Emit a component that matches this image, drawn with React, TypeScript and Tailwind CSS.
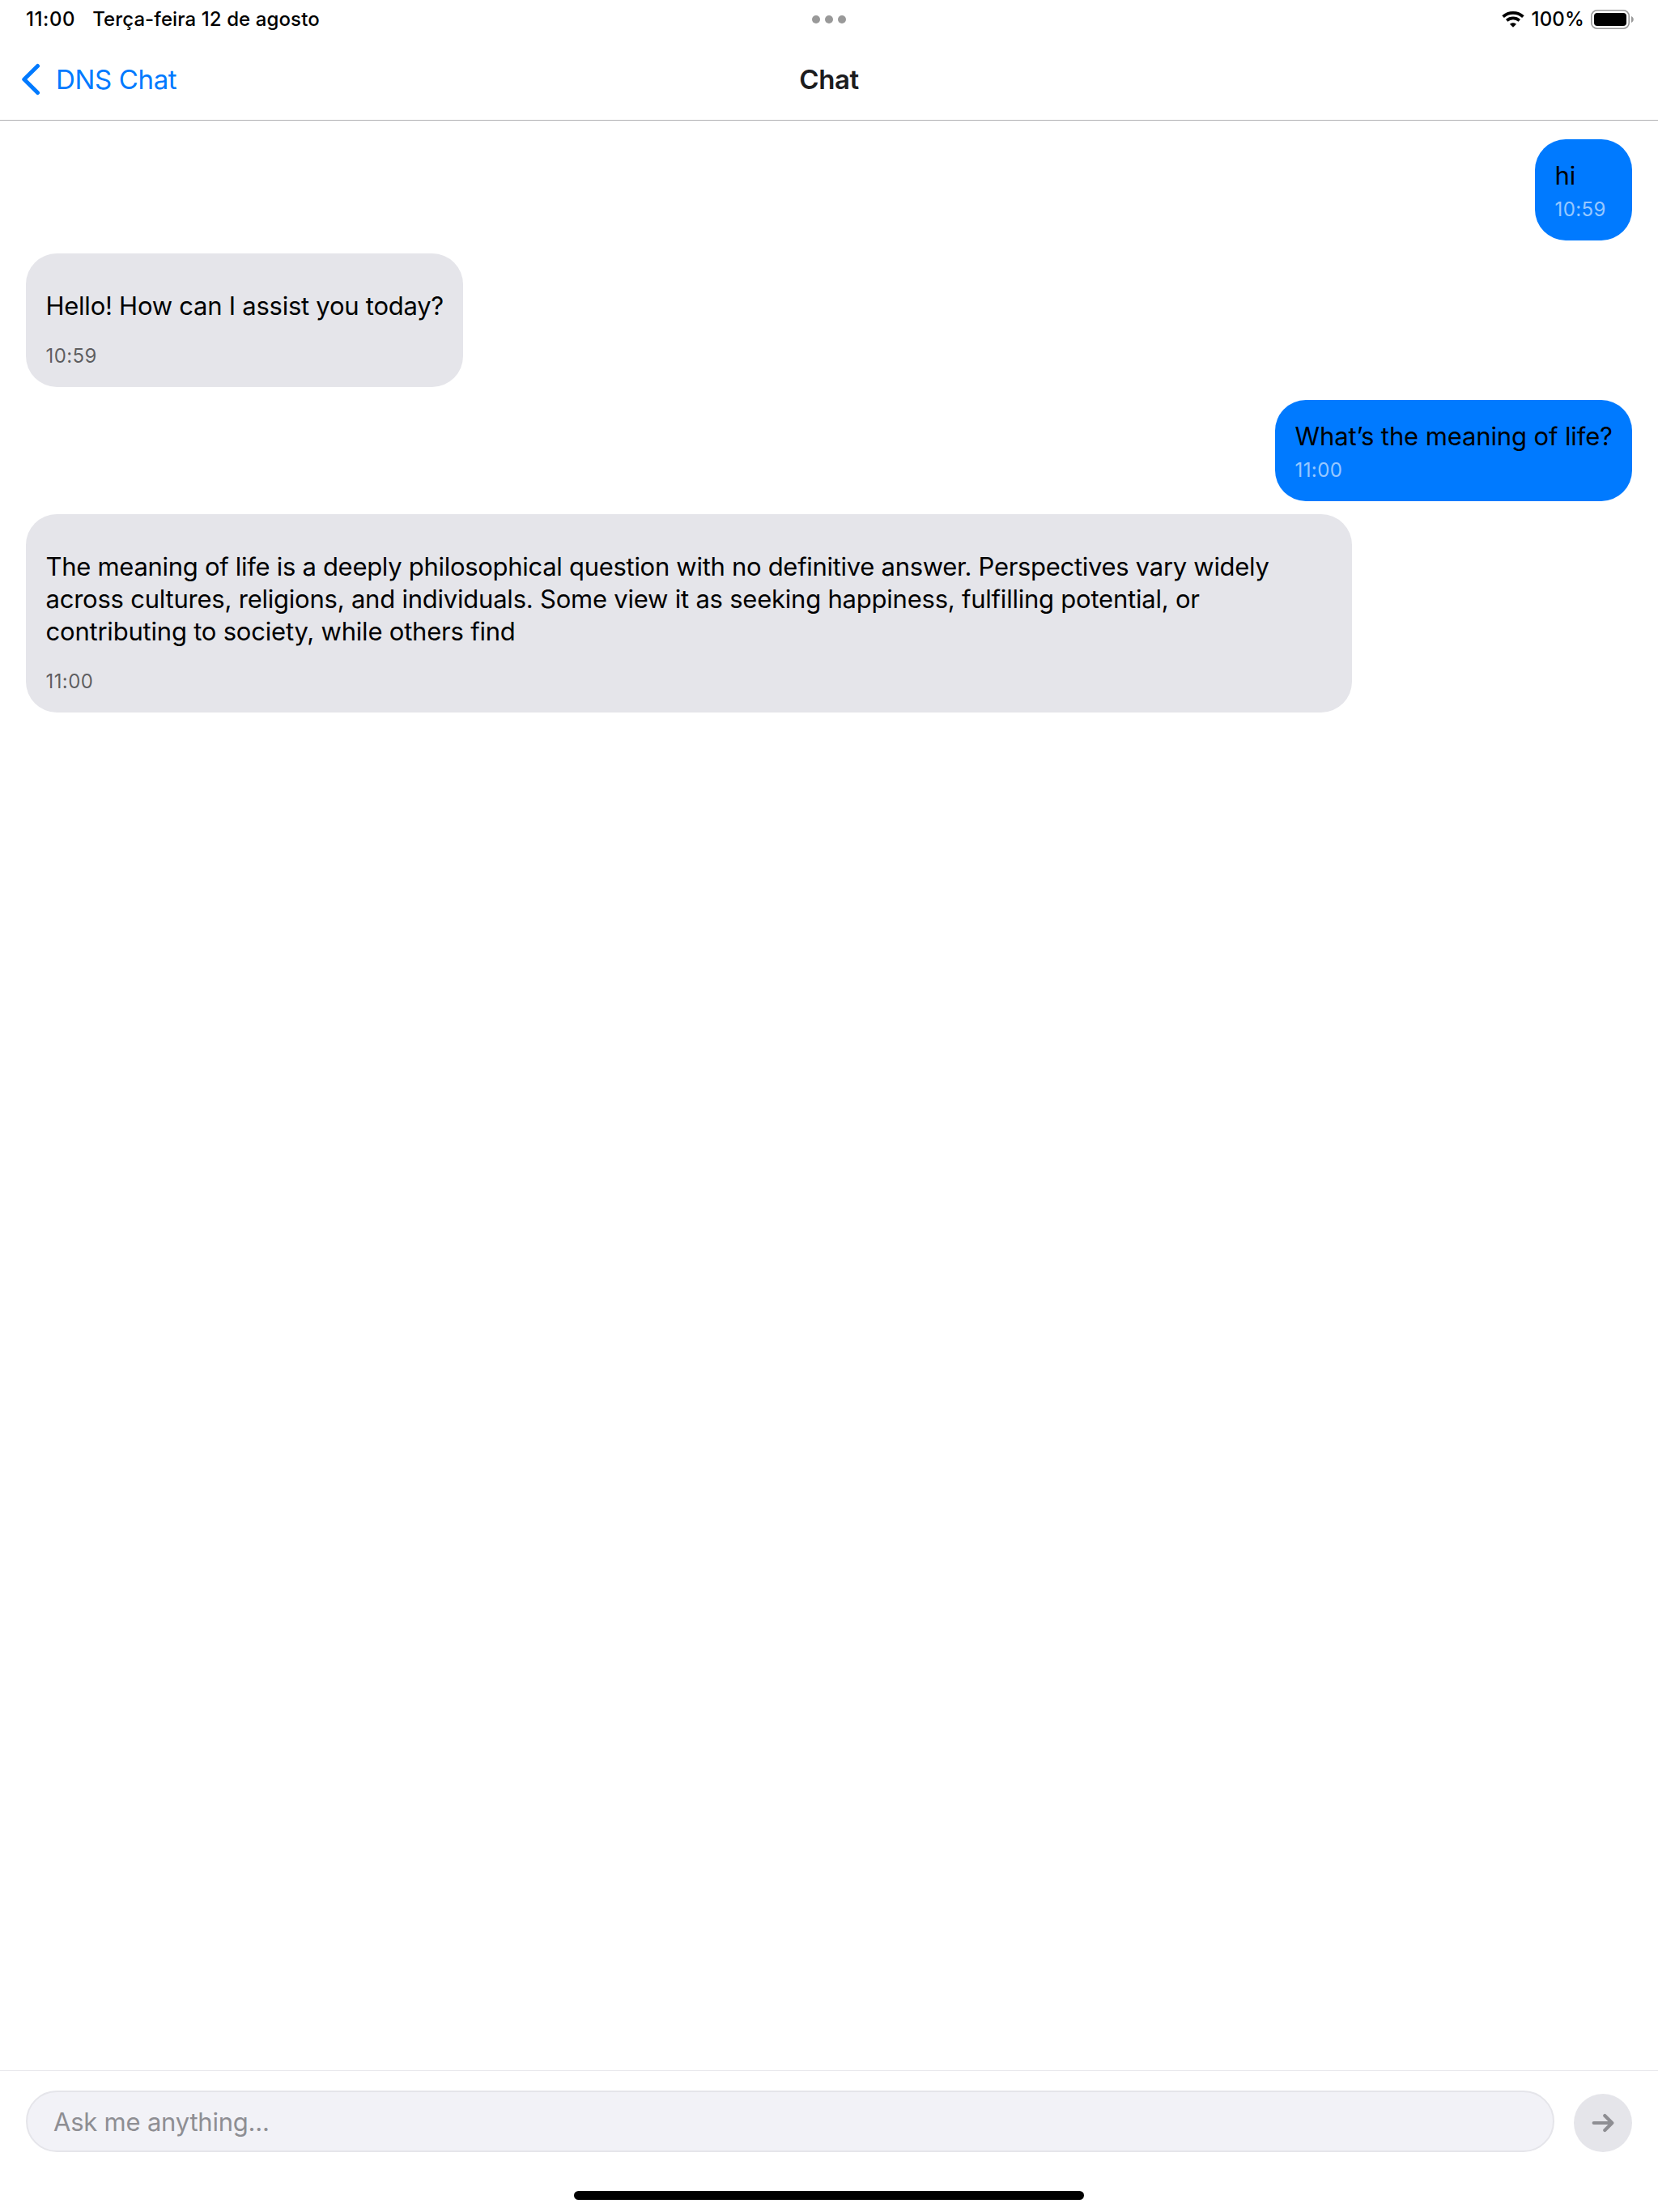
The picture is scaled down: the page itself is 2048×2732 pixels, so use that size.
function WifiIcon() {
  return (
    <svg className="h-5 w-7" viewBox="0 0 28 20" fill="none">
      <path d="M1.600 6.700C8.500 .300 19.500 .300 26.400 6.700" stroke="#000" strokeWidth="3.800" />
      <path d="M6.200 11.400C10.600 7.400 17.400 7.400 21.800 11.400" stroke="#000" strokeWidth="3.700" />
      <path d="M14 19.800L9.900 15.700C12.200 13.600 15.800 13.600 18.100 15.700Z" fill="#000" />
    </svg>
  );
}

function BatteryIcon() {
  return (
    <svg className="h-6 w-[53px]" viewBox="0 0 53 24" fill="none">
      <rect x="0.800" y="0.800" width="46.400" height="22.400" rx="7" stroke="#999" strokeWidth="1.600" />
      <rect x="4" y="4" width="40" height="16" rx="4" fill="#000" />
      <path d="M50 8C53.700 9.500 53.700 14.500 50 16Z" fill="#999" />
    </svg>
  );
}

type Line = { text: string; tracking: string };
type Message = { from: "me" | "bot"; lines: Line[]; time: string; size: string };

const messages: Message[] = [
  { from: "me", lines: [{ text: "hi", tracking: "" }], time: "10:59", size: "w-[120px]" },
  {
    from: "bot",
    lines: [{ text: "Hello! How can I assist you today?", tracking: "tracking-[-0.25px]" }],
    time: "10:59",
    size: "w-[540px]",
  },
  {
    from: "me",
    lines: [{ text: "What’s the meaning of life?", tracking: "tracking-[-0.12px]" }],
    time: "11:00",
    size: "w-[441px]",
  },
  {
    from: "bot",
    lines: [
      {
        text: "The meaning of life is a deeply philosophical question with no definitive answer. Perspectives vary widely",
        tracking: "tracking-[-0.295px]",
      },
      {
        text: "across cultures, religions, and individuals. Some view it as seeking happiness, fulfilling potential, or",
        tracking: "tracking-[-0.225px]",
      },
      { text: "contributing to society, while others find", tracking: "tracking-[-0.21px]" },
    ],
    time: "11:00",
    size: "w-[1638px]",
  },
];

function Bubble({ message }: { message: Message }) {
  const me = message.from === "me";
  return (
    <div
      className={`${message.size} rounded-[38px] pt-[25px] pr-[23px] pb-6 pl-[24.5px] ${
        me ? "self-end bg-[#007aff]" : "self-start bg-[#e5e5ea]"
      }`}
    >
      <div className={`text-[31px] leading-10 whitespace-nowrap text-black ${me ? "" : "py-5"}`}>
        {message.lines.map((line) => (
          <p key={line.text} className={line.tracking}>
            {line.text}
          </p>
        ))}
      </div>
      <p
        className={`pt-[7px] text-2xl leading-[29px] tracking-[0.4px] ${
          me ? "text-white/60" : "text-black/60"
        }`}
      >
        {message.time}
      </p>
    </div>
  );
}

export default function App() {
  return (
    <div className="flex h-[2732px] w-[2048px] flex-col overflow-hidden bg-white font-['Inter',sans-serif]">
      <header className="h-[149px] border-b border-[#b1b1b4]">
        <div className="grid h-12 grid-cols-3 items-center px-[30px]">
          <div className="flex gap-[21px] pl-0.5 text-2xl font-medium text-black">
            <span className="tracking-[0.6px]">11:00</span>
            <span className="tracking-[0.1px]">Terça-feira 12 de agosto</span>
          </div>
          <div className="flex justify-center gap-1.5">
            <i className="size-2.5 rounded-full bg-[#999]" />
            <i className="size-2.5 rounded-full bg-[#999]" />
            <i className="size-2.5 rounded-full bg-[#999]" />
          </div>
          <div className="flex items-center justify-end gap-2 text-2xl font-medium">
            <WifiIcon />
            <span className="pl-px tracking-[0.15px]">100%</span>
            <BatteryIcon />
          </div>
        </div>
        <div className="grid h-[100px] grid-cols-3 items-center px-[26px] text-[33px] leading-none">
          <div className="flex items-center gap-[19px] text-[#007aff]">
            <svg
              className="h-10 w-6"
              viewBox="0 0 24 40"
              fill="none"
              stroke="currentColor"
              strokeWidth="5"
              strokeLinecap="round"
              strokeLinejoin="round"
            >
              <path d="M20.500 3.500L3.800 20L20.500 36.500" />
            </svg>
            <span className="tracking-[-0.35px]">DNS Chat</span>
          </div>
          <h1 className="text-center font-semibold tracking-[-0.4px] text-[#1c1c1e]">Chat</h1>
        </div>
      </header>

      <main className="flex flex-1 flex-col gap-4 px-8 pt-[23px]">
        {messages.map((message) => (
          <Bubble key={message.lines[0].text} message={message} />
        ))}
      </main>

      <footer className="h-[175px] border-t border-[#e5e5ea] px-8 pt-6">
        <div className="flex items-end gap-6">
          <div className="flex h-[76px] flex-1 items-center rounded-full border-2 border-[#e5e5ea] bg-[#f2f2f7] px-8 pt-0.5 text-[31px] tracking-[-0.22px] text-[#8e8e93]">
            Ask me anything...
          </div>
          <button
            aria-label="Send"
            className="flex size-[72px] items-center justify-center rounded-full bg-[#e5e5ea]"
          >
            <svg
              className="h-6 w-7"
              viewBox="0 0 28 24"
              fill="none"
              stroke="#8e8e93"
              strokeWidth="4.200"
              strokeLinecap="round"
              strokeLinejoin="round"
            >
              <path d="M2.700 12H25M16.300 3L25.300 12L16.300 21" />
            </svg>
          </button>
        </div>
        <div className="mx-auto mt-12 h-[11px] w-[630px] rounded-full bg-black" />
      </footer>
    </div>
  );
}
